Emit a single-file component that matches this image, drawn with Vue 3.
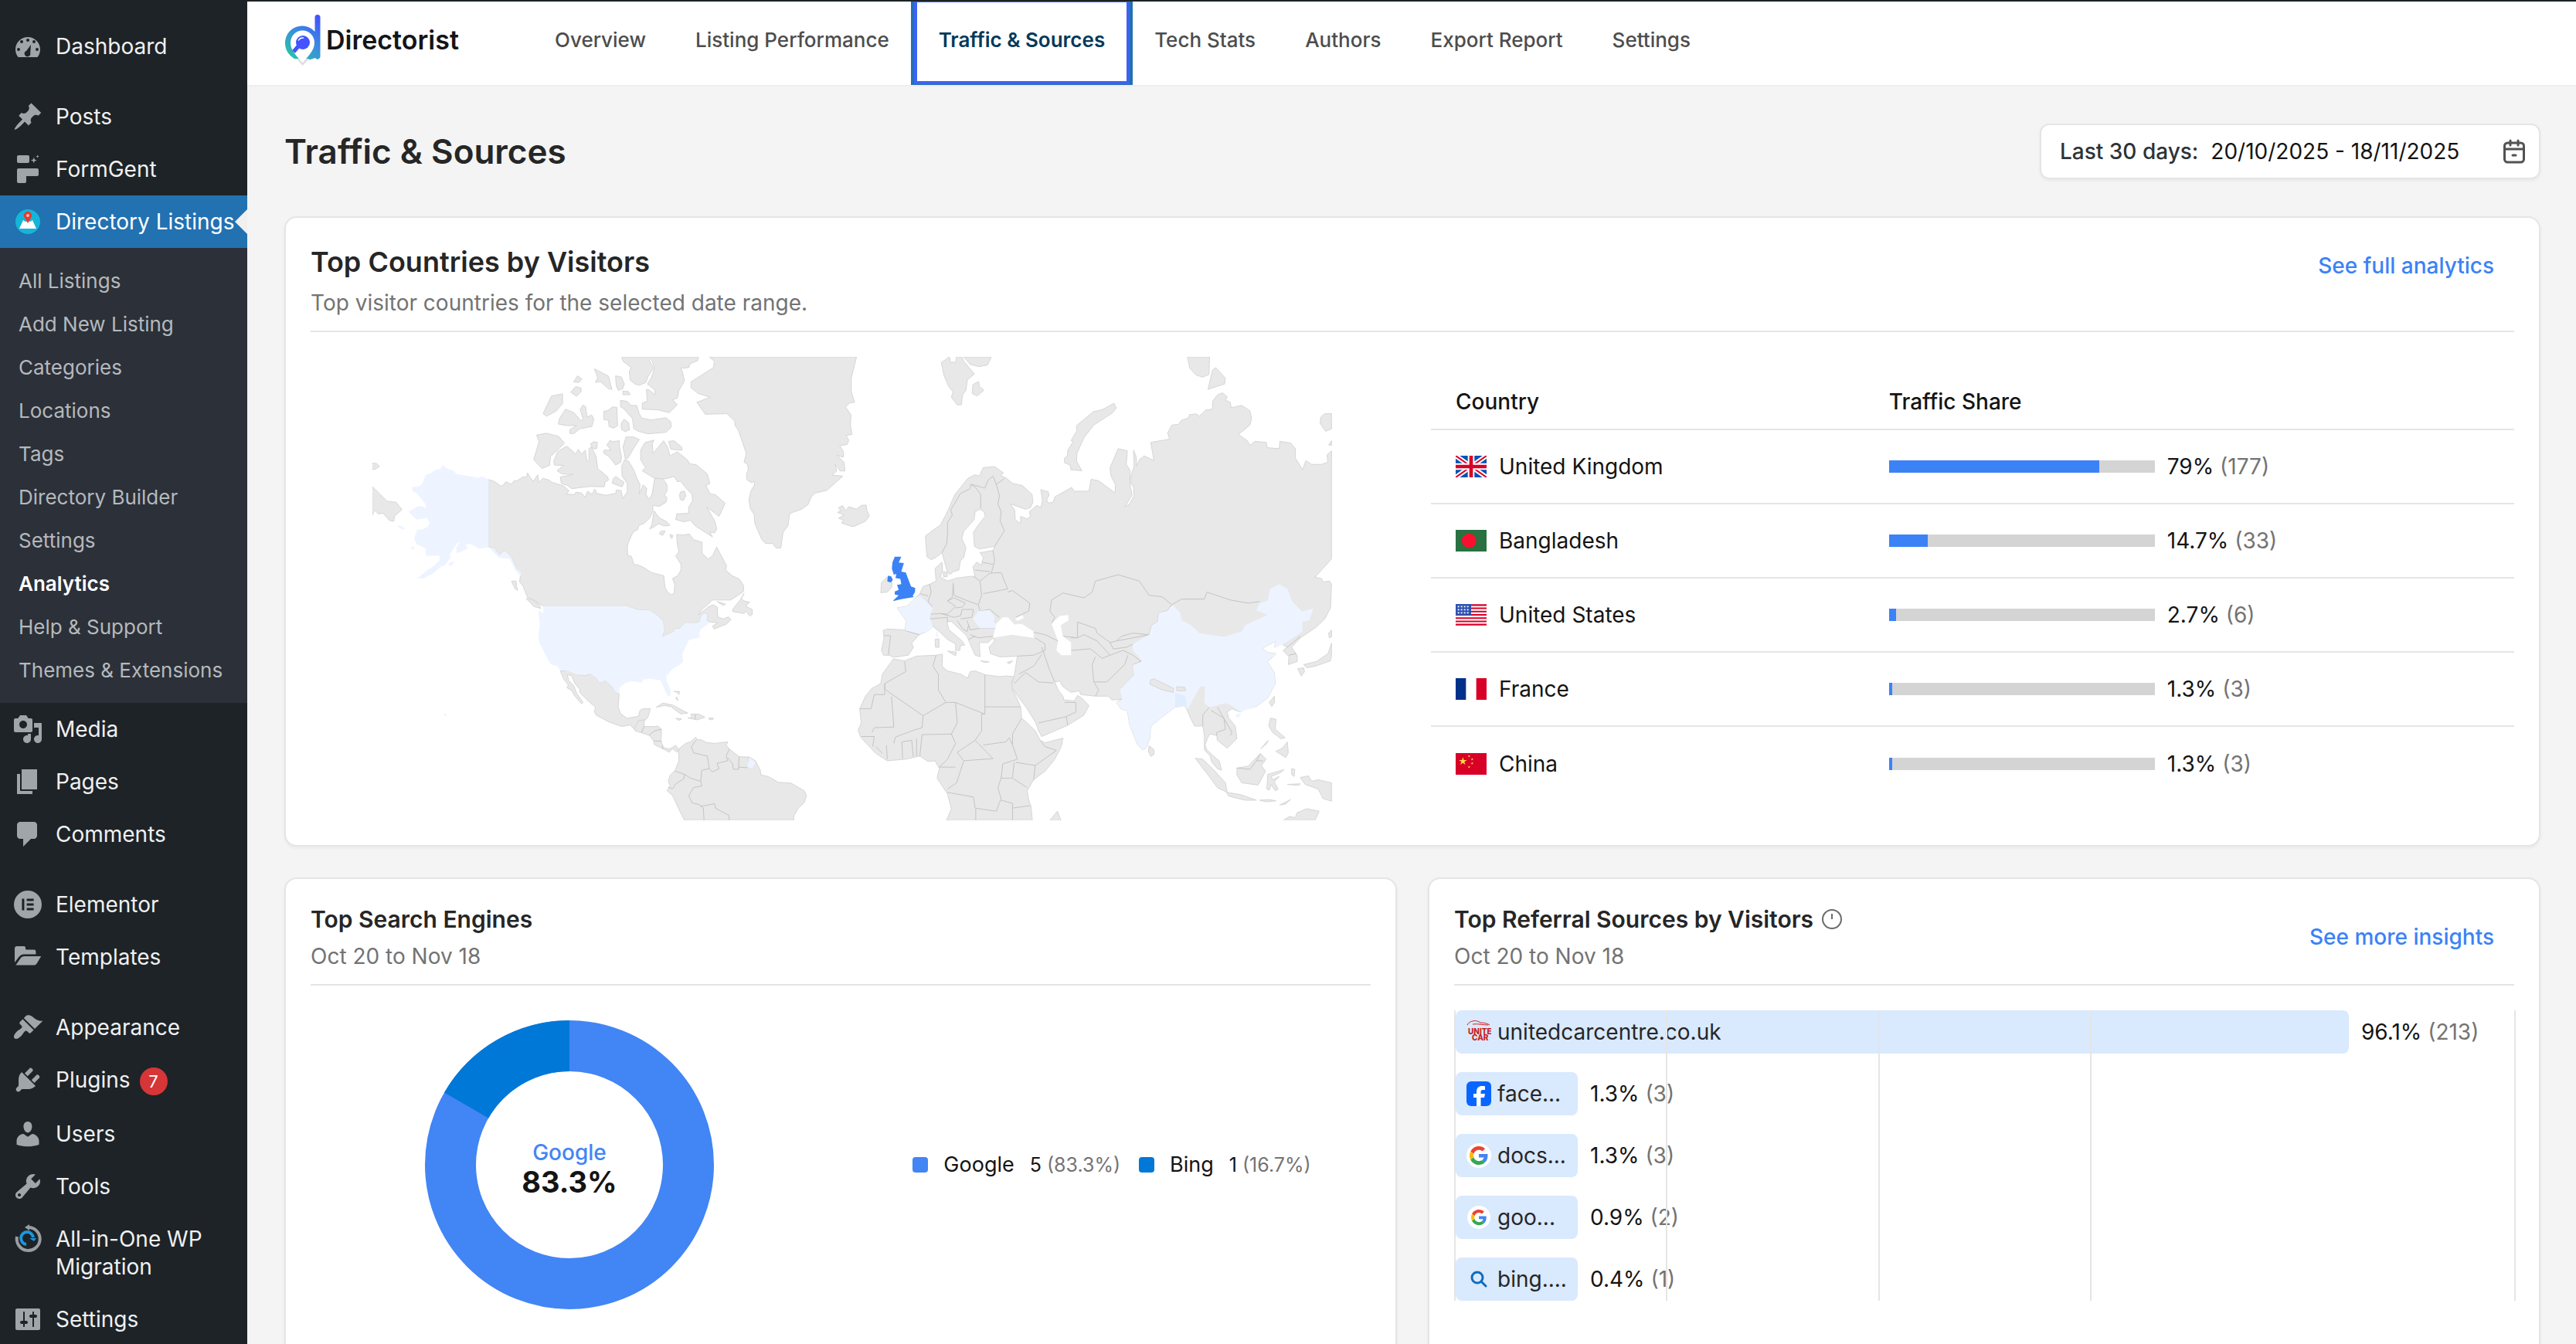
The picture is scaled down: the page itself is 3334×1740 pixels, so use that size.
<script setup>
const menu = [
  [
    { label: 'Dashboard', icon: 'M3.76 17h12.48c1.34-1.63 1.76-3.5 1.76-5 0-4.42-3.58-8-8-8s-8 3.58-8 8c0 1.5.42 3.37 1.76 5zM10 5a1 1 0 110 2 1 1 0 010-2zM6 6a1 1 0 110 2 1 1 0 010-2zM14 6a1 1 0 110 2 1 1 0 010-2zM4 11a1 1 0 110 2 1 1 0 010-2zM16 11a1 1 0 110 2 1 1 0 010-2zM12 9l-.4 5.3a1.9 1.9 0 11-2.6-1.3z' }
  ],
  [
    { label: 'Posts', icon: 'M10.44 3.02l1.82-1.82 6.36 6.35-1.83 1.82c-1.05-.68-2.48-.57-3.41.36l-.75.75c-.92.93-1.04 2.35-.35 3.41l-1.83 1.82-2.41-2.41-2.8 2.79c-.42.42-3.38 2.71-3.8 2.29s1.86-3.39 2.28-3.81l2.79-2.79L4.1 9.36l1.83-1.82c1.05.69 2.48.57 3.4-.36l.75-.75c.93-.92 1.05-2.35.36-3.41z' },
    { label: 'FormGent', icon: 'M4 1h6a1 1 0 011 1v3a1 1 0 01-1 1H4a1 1 0 01-1-1V2a1 1 0 011-1zM4 9.500h12a1 1 0 011 1v3a1 1 0 01-1 1H9V18a1 1 0 01-1 1H4a1 1 0 01-1-1v-7.500a1 1 0 011-1zM13.900 2.200l.5 1.500 1.500.5-1.500.5-.5 1.500-.5-1.500-1.500-.5 1.500-.5zM16.300.800l.3.700.7.300-.7.300-.3.700-.3-.700-.7-.300.7-.300z' },
    { label: 'Directory Listings', kind: 'directory', current: true }
  ],
  [
    { label: 'Media', icon: 'M13 11V4c0-.55-.45-1-1-1h-1.67L9 1H5L3.67 3H2c-.55 0-1 .45-1 1v7c0 .55.45 1 1 1h10c.55 0 1-.45 1-1zM7 4.500c1.380 0 2.500 1.120 2.500 2.500S8.380 9.500 7 9.500 4.500 8.380 4.500 7 5.620 4.500 7 4.500zM14 6h5v10.500c0 1.380-1.120 2.500-2.500 2.500S14 17.880 14 16.500s1.120-2.500 2.500-2.500c.17 0 .34.02.5.05V9h-3V6zm-4 8.050V13h2v3.500c0 1.380-1.120 2.500-2.500 2.500S7 17.880 7 16.500 8.120 14 9.500 14c.17 0 .34.02.5.05z' },
    { label: 'Pages', icon: 'M6 15V2h10v13H6zm-1 1h8v2H3V5h2v11z' },
    { label: 'Comments', icon: 'M5 2h9c1.100 0 2 .9 2 2v7c0 1.100-.9 2-2 2h-2l-5 5v-5H5c-1.100 0-2-.9-2-2V4c0-1.100.9-2 2-2z' }
  ],
  [
    { label: 'Elementor', icon: 'M10 1a9 9 0 110 18 9 9 0 010-18zM6.200 6.200V13.800H7.700V6.200zM9.300 6.200V7.700H13.800V6.200zM9.300 9.250V10.750H13.800V9.250zM9.300 12.300V13.800H13.800V12.300z' },
    { label: 'Templates', icon: 'M1.500 13.500V4.500A1.500 1.500 0 013 3h4.500A1 1 0 018.500 4v.5A.8.8 0 009.300 5.300H14A1.200 1.200 0 0115.200 6.500V8.300H7.500C6 8.300 5 9 4 10.200zM2.200 15.300L5 11.200C5.800 10 6.600 9.500 8 9.500h10.600l-2.600 4.400c-.6 1-1.200 1.400-2.400 1.400z' }
  ],
  [
    { label: 'Appearance', icon: 'M14.480 11.060L7.410 3.990l1.500-1.500c.5-.56 2.300-.47 3.510.32 1.210.8 1.430 1.280 2.910 2.100 1.180.64 2.450 1.260 4.450.85zm-.71.71L6.700 4.700 4.930 6.470c-.39.39-.39 1.020 0 1.410l1.060 1.060c.39.39.39 1.030 0 1.420-.6.6-1.430 1.110-2.210 1.690-.35.26-.7.53-1.010.84C1.430 14.230.4 16.080 1.400 17.070c.99 1 2.840-.03 4.180-1.360.31-.31.58-.66.85-1.020.57-.78 1.080-1.610 1.690-2.210.39-.39 1.020-.39 1.410 0l1.060 1.060c.39.39 1.020.39 1.410 0z' },
    { label: 'Plugins', badge: '7', icon: 'M13.110 4.360L9.870 7.600 8 5.730l3.240-3.240c.35-.34 1.050-.2 1.560.32.52.51.66 1.210.31 1.550zm-8 1.770l.91-1.120 9.010 9.010-1.190.84c-.71.71-2.630 1.160-3.820 1.160H6.140L4.900 17.260c-.59.59-1.540.59-2.120 0-.59-.58-.59-1.530 0-2.120l1.240-1.240v-3.880c0-1.130.4-3.190 1.090-3.890zm7.260 3.970l3.240-3.240c.34-.35 1.040-.21 1.550.31.52.51.66 1.210.31 1.550l-3.240 3.250z' },
    { label: 'Users', icon: 'M10 9.250c-2.270 0-2.730-3.440-2.730-3.440C7 4.020 7.820 2 9.970 2c2.160 0 2.980 2.020 2.710 3.810 0 0-.41 3.440-2.680 3.440zm0 2.570L12.720 10c2.390 0 4.520 2.330 4.520 4.530v2.490s-3.650 1.130-7.240 1.130c-3.650 0-7.240-1.130-7.240-1.130v-2.490c0-2.250 1.940-4.480 4.470-4.480z' },
    { label: 'Tools', icon: 'M16.680 9.770c-1.340 1.340-3.300 1.670-4.950.99l-5.410 6.520c-.99.99-2.590.99-3.580 0s-.99-2.590 0-3.570l6.520-5.420c-.68-1.650-.35-3.610.99-4.950 1.280-1.280 3.120-1.620 4.720-1.060l-2.890 2.890 2.820 2.820 2.860-2.870c.53 1.580.18 3.390-1.080 4.650zM3.810 16.210c.4.39 1.040.39 1.430 0 .4-.4.4-1.040 0-1.430-.39-.4-1.030-.4-1.430 0-.39.39-.39 1.030 0 1.430z' },
    { label: 'All-in-One WP Migration', kind: 'migration' },
    { label: 'Settings', icon: 'M18 16V4c0-.55-.45-1-1-1H3c-.55 0-1 .45-1 1v12c0 .55.45 1 1 1h14c.55 0 1-.45 1-1zM8 11h1c.55 0 1 .45 1 1s-.45 1-1 1H8v1.500c0 .28-.22.5-.5.5s-.5-.22-.5-.5V13H6c-.55 0-1-.45-1-1s.45-1 1-1h1V5.500c0-.28.22-.5.5-.5s.5.22.5.5V11zm5-2h-1c-.55 0-1-.45-1-1s.45-1 1-1h1V5.500c0-.28.22-.5.5-.5s.5.22.5.5V7h1c.55 0 1 .45 1 1s-.45 1-1 1h-1v5.500c0 .28-.22.5-.5.5s-.5-.22-.5-.5V9z' }
  ]
]

const submenu = ['All Listings', 'Add New Listing', 'Categories', 'Locations', 'Tags', 'Directory Builder', 'Settings', 'Analytics', 'Help & Support', 'Themes & Extensions']

const tabs = ['Overview', 'Listing Performance', 'Traffic & Sources', 'Tech Stats', 'Authors', 'Export Report', 'Settings']

const countries = [
  { code: 'gb', name: 'United Kingdom', share: 79, visits: 177 },
  { code: 'bd', name: 'Bangladesh', share: 14.7, visits: 33 },
  { code: 'us', name: 'United States', share: 2.7, visits: 6 },
  { code: 'fr', name: 'France', share: 1.3, visits: 3 },
  { code: 'cn', name: 'China', share: 1.3, visits: 3 }
]

const engines = [
  { name: 'Google', visits: 5, share: '83.3%', color: '#4285f4' },
  { name: 'Bing', visits: 1, share: '16.7%', color: '#0078d7' }
]

const referrals = [
  { icon: 'ucc', name: 'unitedcarcentre.co.uk', share: '96.1%', visits: 213, wide: true },
  { icon: 'facebook', name: 'face...', share: '1.3%', visits: 3 },
  { icon: 'google', name: 'docs...', share: '1.3%', visits: 3 },
  { icon: 'google-small', name: 'goo...', share: '0.9%', visits: 2 },
  { icon: 'bing', name: 'bing....', share: '0.4%', visits: 1 }
]

const star = 'M0-10L2.250-3.100H9.500L3.640 1.180 5.880 8.100 0 3.800-5.880 8.100-3.640 1.180-9.500-3.100H-2.250z'

/* Land outlines, one list of paths per half of the map */
const westLand = [
  'M1088 54L1104 68 1101 88 1032 133 1032 152 1054 170 1091 182 1050 198 1076 236 1142 234 1166 257 1168 272 1178 288 1202 360 1195 388 1206 394 1208 412 1203 425 1203 443 1218 453 1228 448 1226 462 1216 480 1210 508 1215 537 1226 553 1228 582 1250 634 1262 646 1283 646 1294 660 1308 660 1315 610 1330 590 1335 552 1345 547 1374 536 1392 522 1402 498 1413 486 1450 477 1499 432 1465 429 1480 416 1475 395 1491 416 1505 416 1503 388 1480 366 1500 372 1501 355 1489 335 1512 332 1517 318 1509 303 1527 300 1522 270 1524 238 1507 213 1520 200 1535 198 1525 165 1525 120 1541 54z',
  'M410 443L427 449 447 464 455 460 462 450 480 458 487 448 499 446 516 434 526 436 529 422 538 437 547 449 561 428 563 452 577 439 594 444 605 452 640 463 657 479 648 489 672 491 678 483 696 486 706 500 714 480 728 490 736 473 742 487 770 493 800 487 803 476 817 478 822 503 836 482 836 455 820 432 819 400 828 380 840 385 856 412 866 440 875 458 873 488 885 460 896 471 893 490 904 506 912 490 918 455 920 440 945 440 958 460 958 480 950 492 958 500 955 515 935 528 915 525 914 545 905 565 888 582 872 588 868 602 855 608 840 640 836 655 837 683 849 687 856 712 870 714 890 724 910 738 948 748 952 785 960 800 971 809 980 803 982 775 975 757 992 747 1001 730 1001 712 985 686 995 672 990 650 988 617 1006 619 1027 616 1040 634 1066 642 1066 677 1085 695 1098 685 1111 657 1141 716 1139 730 1158 748 1180 758 1194 780 1193 798 1155 825 1097 825 1085 838 1065 855 1055 872 1085 847 1100 840 1113 848 1113 865 1115 880 1133 885 1147 878 1155 887 1140 902 1103 917 1098 908 1115 897 1090 895 1080 890 1082 870 1072 868 1062 878 1058 894 1050 898 1015 898 997 916 982 916 978 926 943 942 950 920 946 893 930 875 905 858 870 856 836 845 832 838 832 844 577 844 540 820 530 818 515 780 505 768 508 740 495 725 480 690 460 668 442 683 428 662 410 657z',
  'M918 318L890 326 877 350 877 380 892 405 882 415 918 438 950 441 968 437 980 433 990 450 1000 448 1018 472 1035 490 1037 510 1025 530 1024 550 988 552 985 570 1010 577 1030 572 1045 590 1098 625 1090 610 1105 612 1111 600 1105 575 1080 530 1118 560 1137 518 1130 512 1108 492 1090 488 1078 462 1090 456 1082 425 1048 396 1028 393 1020 380 990 355 967 368 960 340 948 320 915 360 913 330z',
  'M650 337L622 354 610 385 612 397 640 398 620 415 635 425 670 427 630 435 633 455 652 462 665 472 720 465 765 466 768 450 778 445 776 435 745 408 740 370 735 358 725 340 718 345 718 385 712 385 707 350 695 362 685 347 678 362z',
  'M557 302L587 296 625 306 643 328 600 370 597 398 574 408 548 380 565 322z',
  'M603 178L637 171 637 202 617 226 588 242 577 234z',
  'M646 220L672 231 694 257 700 250 691 220 700 207 708 212 712 245 726 238 733 250 727 275 690 282 672 297 659 297 660 284 680 272 650 272 624 267 628 248z',
  'M678 148L694 153 694 165 680 179 662 166zM683 114L696 124 688 135 671 134zM735 92L778 115 789 157 778 155 753 132 738 135 745 120zM800 114L818 118 827 140 822 155 808 160 802 145zM822 162L840 164 845 174 823 174z',
  'M764 226L775 225 790 213 804 214 806 272 795 280 780 275 778 255 764 253zM826 252L840 262 843 285 830 291 818 284 817 265z',
  'M815 192L835 195 848 208 865 208 872 232 880 248 910 254 955 247 970 260 971 277 955 293 900 298 870 290 856 282 852 250 825 218 815 212z',
  'M819 54L823 68 848 88 842 100 845 128 860 140 873 144 893 135 900 115 917 90 905 68 905 54z',
  'M908 54L920 90 910 120 898 140 920 158 922 175 905 160 895 157 897 195 882 200 882 220 930 222 965 231 990 206 975 190 990 185 995 160 1012 130 1005 100 1000 90 1025 88 1030 75 1052 66 1055 54z',
  'M784 318L790 323 812 320 812 340 818 370 816 388 800 397 780 370 764 360 764 350 786 350 773 333zM832 308L855 308 873 316 855 345 838 375 830 378 823 340zM733 323L744 325 742 345 730 345 723 330z',
  'M800 433L826 452 820 466 790 455 792 442zM963 322L980 320 1003 340 1004 350 970 347zM918 542L935 565 955 575 967 588 950 590 932 583 920 592 905 600 912 585zM940 607L953 606 945 620 934 615zM968 617L976 620 973 630 968 625z',
  'M480 765L494 765 495 780 499 795 490 788zM525 820L545 825 565 840 570 852 548 845zM1195 804L1183 825 1160 855 1160 862 1185 866 1195 868 1200 860 1213 876 1221 870 1220 855 1200 845 1212 832 1195 828 1187 820zM1113 830L1138 838 1130 842zM1000 482L1012 480 1016 495 1008 510 998 505 997 490z',
  'M630 1050L652 1049 680 1062 710 1064 722 1058 740 1072 752 1088 768 1080 790 1100 800 1118 811 1122 808 1165 815 1185 835 1200 870 1194 875 1175 885 1170 907 1170 900 1195 893 1205 885 1206 870 1208 867 1220 858 1235 845 1222 818 1226 780 1212 740 1190 735 1180 738 1165 710 1140 690 1118 690 1108 675 1090 665 1065 652 1062 655 1080 672 1098 680 1120 700 1150 696 1155 675 1130 665 1112 650 1103 655 1095 640 1075z',
  'M870 1208L889 1205 887 1226 918 1227 930 1225 941 1235 940 1270 942 1280 945 1292 965 1298 985 1286 994 1298 990 1308 975 1297 965 1308 948 1298 920 1284 916 1270 903 1254 880 1246 860 1240 858 1232z',
  'M925 1165L945 1152 975 1158 1022 1184 1000 1186 985 1175 970 1163 950 1160zM1022 1199L1035 1198 1032 1187 1055 1187 1075 1197 1050 1205zM1087 1199L1101 1200 1098 1205 1088 1204zM985 1200L1003 1202 995 1207zM980 1115L996 1115 995 1125 990 1118zM988 1132L992 1144 985 1138z',
  'M994 1298L1015 1280 1030 1275 1047 1260 1050 1268 1062 1268 1080 1277 1105 1280 1145 1275 1140 1285 1150 1298 1165 1310 1180 1322 1210 1323 1230 1335 1245 1365 1247 1380 1270 1385 1300 1403 1340 1406 1380 1430 1387 1445 1380 1468 1362 1485 1348 1510 1348 1524 1012 1524 1000 1500 975 1445 958 1430 968 1415 962 1400 968 1380 983 1365 995 1335z',
  'M52 465L98 512 125 515 143 538 120 560 118 575 105 573 85 550 70 552 60 540 52 556zM52 391L65 392 74 401 62 410 52 411z'
]
const westBorders = 'M887 1226L880 1246M903 1254L920 1240 941 1235M918 1272L940 1273M945 1285V1298M1045 1187V1204M1047 1270L1033 1290 1040 1310 1082 1320 1088 1360 1065 1365 1062 1400 1030 1390 1012 1378 983 1368M1088 1360L1098 1370 1118 1360 1112 1343 1145 1335 1140 1320 1150 1298M1145 1325L1160 1345 1162 1362 1178 1362 1180 1322M1178 1355L1207 1357 1210 1323M1062 1400L1065 1415 1040 1420 1025 1445 1035 1468 1060 1475 1070 1485 1072 1524M1060 1480L1105 1471 1107 1485 1148 1508 1150 1524M1012 1378L1010 1392 985 1408 975 1424 962 1418'
const westVisited = [
  'M410 443L388 433 378 437 355 433 310 425 302 415 285 410 267 398 262 410 245 412 233 422 217 427 206 455 195 465 175 466 175 479 190 488 215 520 218 533 200 527 188 530 163 545 188 570 220 565 228 580 225 590 210 600 190 602 180 630 188 648 215 660 217 685 260 685 258 700 240 718 225 727 190 757 210 757 240 740 262 720 275 715 293 690 290 680 313 645 322 640 310 660 312 678 345 662 340 648 355 648 380 662 410 658 440 690 475 695 490 728 508 750 510 738 495 725 480 690 460 668 442 683 428 662 410 657zM285 712L297 702 305 706 292 718zM126 590L140 590 153 598 146 602zM168 657L182 658 178 666zM272 1184L282 1188 275 1194z',
  'M577 844L832 844 832 838 836 845 870 856 905 858 930 875 946 893 950 920 943 942 978 926 982 916 997 916 1015 898 1050 898 1058 894 1062 878 1072 868 1082 870 1080 890 1090 897 1060 920 1057 935 1062 943 1025 952 1020 965 1010 985 1005 1000 1008 1020 1000 1028 975 1045 957 1065 957 1080 970 1115 968 1130 960 1130 945 1095 938 1080 920 1077 905 1075 885 1078 880 1088 850 1082 830 1088 812 1104 811 1122 800 1118 790 1100 768 1080 752 1088 740 1072 722 1058 710 1062 680 1062 652 1050 630 1048 620 1035 600 1028 580 990 565 960 563 930 567 905 562 855 578 868z',
  'M1210 1325L1230 1340 1220 1358 1205 1356z'
]

const eastLand = [
  'M-38 547L-28 543 -35 532 -22 526 -13 543 -5 531 0 530 20 537 36 525 50 524 52 540 60 558 48 575 12 592 0 590 -25 581 -20 571 -35 566 -18 555z',
  'M306 54L281 72 290 115 305 150 317 165 312 182 330 206 343 206 346 175 357 160 361 127 383 108 350 68 345 54 328 54 325 71 309 71zM350 54L370 78 397 85 423 80 435 54zM396 132L398 148 412 160 391 178 376 170 378 142z',
  'M812 201L819 216 808 231 750 270 720 310 698 360 697 385 713 415 680 412 677 397 660 390 660 375 669 368 670 350 687 322 680 320 697 290 697 272 748 228 775 222z',
  'M1038 54L1045 90 1065 112 1085 118 1104 110 1106 54zM1125 88L1155 122 1152 140 1101 157 1115 96zM1481 234L1460 234 1448 245 1446 265 1463 290 1481 282zM1481 320L1472 333 1481 335z',
  'M232 622L260 600 278 588 300 545 322 492 362 440 384 428 398 432 410 405 445 402 472 422 463 430 480 438 500 455 530 462 560 490 563 515 555 532 540 537 520 530 493 520 507 540 508 570 525 583 525 560 545 568 555 560 552 545 575 525 587 532 592 510 587 475 610 482 612 495 605 505 610 518 625 515 630 498 682 468 690 480 735 480 742 442 765 447 815 485 817 460 802 430 800 405 825 345 853 352 850 395 862 415 860 455 868 492 845 530 860 520 874 494 872 466 863 456 865 430 874 400 872 350 880 370 882 400 890 380 905 368 935 383 925 325 983 315 977 295 990 270 1010 268 1020 255 1040 248 1045 237 1065 235 1075 242 1095 222 1115 220 1115 195 1130 175 1145 168 1160 180 1155 192 1170 198 1172 215 1205 208 1230 225 1235 250 1230 270 1195 300 1222 320 1230 335 1245 322 1280 325 1283 342 1320 345 1322 322 1355 327 1370 345 1370 375 1392 412 1402 383 1420 395 1450 395 1470 388 1467 365 1481 352 1481 695 1430 753 1450 757 1455 768 1475 765 1481 775 1478 850 1460 885 1435 910 1410 928 1385 945 1358 975 1375 1000 1376 1020 1348 1030 1350 1005 1332 985 1345 975 1328 965 1305 975 1310 955 1268 978 1285 992 1310 995 1295 1010 1283 1020 1305 1055 1308 1090 1285 1135 1250 1162 1215 1172 1200 1180 1175 1170 1160 1180 1165 1200 1185 1225 1190 1265 1160 1295 1148 1285 1130 1270 1128 1255 1108 1250 1100 1262 1092 1285 1098 1300 1118 1320 1135 1335 1143 1365 1130 1360 1112 1338 1108 1320 1090 1300 1090 1255 1085 1225 1060 1225 1050 1205 1035 1170 1028 1160 1000 1165 980 1180 925 1225 922 1265 910 1295 900 1300 885 1285 860 1220 853 1175 835 1172 820 1150 835 1140 805 1142 795 1130 755 1130 710 1125 705 1113 680 1118 655 1100 645 1082 630 1085 640 1110 655 1130 658 1142 690 1145 700 1128 712 1135 735 1160 720 1190 670 1222 590 1258 580 1240 572 1215 545 1170 520 1135 495 1100 505 1068 515 1003 480 1005 460 1005 432 995 428 975 445 955 440 945 425 960 398 960 400 1005 385 1000 370 965 360 940 340 920 312 893 298 895 305 920 345 955 353 968 340 970 338 985 325 985 325 965 300 950 275 925 250 905 245 920 213 935 190 962 195 975 180 1000 135 1007 120 1000 103 1000 97 985 105 945 102 922 115 917 170 920 173 890 145 850 175 845 200 820 215 805 225 782 245 775 265 765 262 725 283 705 285 730 278 752 300 765 330 755 372 750 385 750 378 720 390 705 405 715 410 690 400 675 440 668 445 655 398 663 383 655 380 610 400 580 416 560 413 545 400 537 385 545 382 570 350 607 344 630 357 660 350 690 340 700 335 730 318 735 308 744 300 738 290 700 283 675 262 692 250 697 237 688z',
  'M133 1012L168 1018 205 1003 265 1000 285 997 283 1035 300 1050 340 1060 362 1073 370 1052 385 1050 415 1062 460 1068 483 1066 505 1068 497 1085 500 1110 515 1140 525 1165 528 1200 545 1215 570 1240 585 1270 600 1278 655 1263 650 1290 630 1330 600 1368 565 1395 545 1430 550 1460 557 1480 561 1524 297 1524 312 1487 300 1440 268 1390 275 1360 262 1335 240 1337 215 1320 170 1330 115 1335 80 1312 55 1285 33 1260 25 1238 35 1215 30 1170 48 1130 68 1105 95 1090 100 1060 128 1020z',
  'M262 950L274 948 274 975 263 975zM300 987L327 990 325 1002zM402 1018L428 1021 415 1023zM483 1023L500 1018 492 1027zM287 735L298 738 300 750 288 752zM115 752L118 768 130 770 128 785 115 800 95 802 97 770z',
  'M618 1520L638 1495 649 1524 615 1524zM920 1287L935 1300 935 1315 925 1321 918 1305z',
  'M1062 1327L1085 1330 1120 1365 1155 1405 1160 1435 1130 1420 1105 1385zM1158 1435L1200 1442 1250 1460 1215 1460 1165 1447zM1190 1358L1225 1352 1262 1312 1280 1330 1265 1350 1278 1368 1255 1412 1205 1405 1190 1380z',
  'M1285 1378L1335 1363 1325 1372 1295 1385 1300 1395 1320 1385 1305 1402 1317 1425 1308 1430 1295 1410 1290 1428 1282 1425zM1293 1200L1310 1203 1308 1235 1325 1250 1338 1262 1325 1265 1300 1245 1288 1225zM1345 1275L1348 1310 1340 1325 1310 1305 1330 1295zM1263 1297L1286 1270 1282 1280zM1305 1130L1306 1150 1297 1163 1290 1150z',
  'M1481 962L1470 995 1435 1020 1395 1030 1405 1040 1430 1035 1450 1028 1478 1018 1481 1000zM1377 1043L1395 1040 1398 1052 1388 1066zM1481 920L1472 930 1474 945 1481 942z',
  'M1385 1388L1410 1383 1420 1400 1440 1395 1481 1405 1481 1463 1455 1455 1440 1425 1400 1410zM1260 1460L1290 1458 1310 1462 1280 1465zM1322 1475L1355 1458 1340 1472zM1358 1360L1368 1362 1366 1385 1358 1378zM1345 1410L1385 1408 1380 1413zM1333 1524L1350 1512 1370 1515 1375 1500 1405 1487 1443 1495 1430 1524z'
]
const seas = 'M450 900L440 945 500 935 530 940 565 945 565 925 528 900 505 903 495 890 485 880 470 880 455 895zM508 884L530 873 535 882 515 892zM620 900L645 875 672 873 672 890 648 905 655 940 680 960 680 1000 650 1000 635 985 640 955z'
const eastBorders = [
  'M283 675L297 648 300 620 300 580 315 555 310 540 340 487 370 472 372 458 385 467 402 490 402 535M372 458L415 470 425 445 440 432 450 458 475 440M450 458L460 495 455 520 465 545 462 575 475 605 445 655',
  'M105 938L125 938 118 1000M170 922L213 935M245 775L250 800 240 830 252 845 245 870 280 868 300 870 325 845 300 828 315 815 318 770M318 775L320 810 355 825 395 840 405 810 400 765M300 828L320 818 355 835 345 848 325 850M215 805L240 812M280 868L320 880 340 875 345 855 380 855 375 880 340 885M400 765L430 740 465 738 485 790 410 805M440 668L445 700 435 740M385 730L430 735M380 750L400 765M405 705L440 712M395 840L400 860 430 855 460 880M485 800L500 795 553 835 550 860 510 880M245 885L300 880 300 895M330 890L345 915 360 925 365 905M360 890L370 920 400 915 445 915M370 935L395 945 440 940M365 950L385 940',
  'M525 900L555 925 600 935 640 955M570 945L600 965 600 985 565 1000 515 1003M615 860L620 825 655 803 720 818 745 800 755 765 825 745 890 765 920 810 960 815 990 840 975 860 950 865 945 895 928 905 920 935 870 930 835 940 820 955 800 960 760 930 755 915 700 895 700 945 655 940M615 860L630 880 620 900M680 945L700 945 720 935 760 955 800 1000 775 1010 740 980 680 985M800 960L810 980 850 975 870 965M820 955L920 935M800 1000L840 985 870 1000 895 1020 870 1030 880 1055 835 1105M755 1005L745 1030 750 1085 765 1110 755 1130M750 1085L790 1085 845 1030 855 1000M590 975L615 1050 630 1085M590 997L565 1035 520 1060M505 1090L540 1055 580 1085 625 1088M580 1215L665 1195 670 1222M665 1195L695 1180 695 1150 660 1150',
  'M990 840L1020 822 1090 822 1098 800 1170 825 1225 835 1260 830M1345 975L1385 940M1350 1000L1372 995M1105 1165L1085 1190 1085 1225M1110 1175L1150 1200 1155 1235 1128 1245 1128 1255M1130 1165L1175 1245 1170 1255M1190 1358L1230 1362 1250 1335 1270 1335M1250 1335L1262 1312',
  'M168 1020L172 1052 107 1090 107 1108 225 1192 295 1150 272 1110 272 1060 255 1035 265 1000M415 1062V1187L325 1150 295 1150M415 1164H525M107 1125H75L65 1170H30M107 1090V1125M128 1132L135 1228 75 1230 68 1245M225 1192L222 1230 190 1240 140 1260 135 1280M325 1150L330 1215 312 1250 222 1252M405 1187V1240L385 1270 330 1308M405 1187H415M312 1250L325 1280 300 1330 275 1355 325 1355M330 1308L350 1335M385 1270L440 1328 350 1335 328 1405 300 1425M410 1285L480 1275 490 1262 500 1285 515 1330 470 1345 465 1390M528 1200L500 1250 500 1285M585 1270L600 1290 635 1302 570 1350 565 1395M510 1340L570 1350M465 1390H500L545 1420M500 1388L505 1340M465 1390L455 1420 465 1455 450 1495 385 1485 380 1450 300 1435M387 1524V1485M465 1460L500 1470 500 1524M500 1485L555 1477M160 1275L162 1328M190 1270L195 1322M160 1275L190 1270M205 1265V1320M215 1320L222 1252M112 1285L115 1330M35 1258H75L70 1290M80 1290L100 1312'
]
const eastVisited = [
  'M992 840L1015 865 1020 890 1050 905 1075 930 1150 942 1205 925 1215 905 1285 872 1250 858 1260 835 1285 828 1292 790 1320 775 1345 790 1360 830 1390 862 1425 852 1412 890 1390 895 1392 925 1355 950 1328 968 1305 975 1310 955 1268 978 1285 992 1310 995 1283 1020 1305 1055 1308 1090 1285 1135 1250 1162 1200 1180 1175 1160 1155 1152 1125 1160 1105 1165 1090 1150 1092 1100 1078 1098 1058 1135 1038 1172 1028 1160 1000 1165 980 1180 925 1225 922 1265 910 1295 900 1300 885 1285 860 1220 853 1175 835 1172 820 1150 838 1140 830 1110 875 1060 870 1030 900 1020 870 985 870 965 920 935 928 905 945 895 950 865 975 860z',
  'M1187 1188L1204 1184 1195 1200 1186 1195z',
  'M145 850L175 845 200 820 215 812 240 835 255 850 245 880 255 910 250 920 215 932 170 922 173 890z',
  'M395 860L430 857 445 880 442 895 450 900 445 915 400 915 378 885z',
  'M265 928L271 926 270 945 265 940z'
]
const nepal = 'M925 1078L935 1075 995 1105 995 1118 960 1110 922 1092zM1005 1100L1030 1102 1032 1113 1005 1113z'
const bangladesh = 'M1000 1120L1030 1128 1035 1150 1038 1172 1028 1158 1000 1165z'
const britain = 'M138 688L158 688 150 706 166 708 158 735 172 738 178 755 188 782 201 787 200 800 193 812 197 816 160 822 135 828 133 827 150 810 138 808 138 798 150 793 145 777 158 775 155 758 140 755 143 742 135 745 129 725 131 705zM117 748L127 750 132 762 126 769 115 766z'
</script>

<template>
  <div class="admin">
    <nav class="sidebar" aria-label="Admin menu">
      <ul v-for="(group, g) in menu" :key="g" :class="['group', { flush: g === 2 }]">
        <li v-for="item in group" :key="item.label">
          <a href="#" :class="['item', { current: item.current }]">
            <svg v-if="item.icon" class="glyph" viewBox="0 0 20 20" aria-hidden="true">
              <path :d="item.icon" fill="#a0a5aa" fill-rule="evenodd" />
            </svg>
            <svg v-else-if="item.kind === 'directory'" class="glyph" viewBox="0 0 40 40" aria-hidden="true">
              <circle cx="20" cy="20" r="16" fill="#14b5d8" />
              <path d="M14 18l-5 11h22l-5-11-3 2-3-1-3 1z" fill="#fff" />
              <path d="M20 22l-4-7a5 5 0 118 0z" fill="#e8382e" />
              <circle cx="20" cy="12" r="2" fill="#fbb" />
            </svg>
            <svg v-else class="glyph" viewBox="0 0 40 40" aria-hidden="true">
              <path d="M20 5a15 15 0 11-14 12" fill="none" stroke="#9a9da0" stroke-width="4" />
              <path d="M22 1v8l-6-4z" fill="#9a9da0" />
              <path d="M18 27a8 8 0 119-9" fill="none" stroke="#1c97dc" stroke-width="4" />
              <path d="M22 19h9l-3 4z" fill="#1c97dc" />
            </svg>
            <span class="name">{{ item.label }}</span>
            <span v-if="item.badge" class="badge">{{ item.badge }}</span>
          </a>
          <ul v-if="item.current" class="submenu">
            <li v-for="sub in submenu" :key="sub">
              <a href="#" :class="{ active: sub === 'Analytics' }">{{ sub }}</a>
            </li>
          </ul>
        </li>
      </ul>
    </nav>

    <div class="page">
      <header class="topbar">
        <a href="#" class="brand">
          <svg class="logo" viewBox="0 0 48 68" aria-hidden="true">
            <defs>
              <linearGradient id="brandTint" x1="2" y1="56" x2="44" y2="4" gradientUnits="userSpaceOnUse">
                <stop offset="0" stop-color="#27c7a0" />
                <stop offset=".5" stop-color="#3a8fdc" />
                <stop offset="1" stop-color="#4353ff" />
              </linearGradient>
            </defs>
            <path d="M39.500 4.500a3.500 3.500 0 017 0V55a3.500 3.500 0 01-6.500 2L34 59 13 58C5 53 1 46 1 38a22 22 0 0138.500-15z" fill="url(#brandTint)" />
            <path d="M16 58h16l-8.500 9z" fill="#ddd" />
            <path d="M23.500 21.500c9 0 15.500 7 15.500 16 0 10-9 18-15.500 26C17 55.500 8 47.500 8 37.500c0-9 6.500-16 15.500-16z" fill="#fff" />
            <path d="M18 42l-6 7" stroke="#4353ff" stroke-width="5" />
            <circle cx="24" cy="37" r="9" fill="#4353ff" />
            <path d="M18.500 34a6 6 0 016-3" fill="none" stroke="#fff" stroke-width="1.500" stroke-linecap="round" />
          </svg>
          <span>Directorist</span>
        </a>
        <nav class="tabs" aria-label="Analytics sections">
          <a v-for="tab in tabs" :key="tab" href="#" :class="{ selected: tab === 'Traffic & Sources' }">{{ tab }}</a>
        </nav>
      </header>

      <main class="content">
        <div class="heading">
          <h1>Traffic &amp; Sources</h1>
          <button type="button" class="range">
            <span class="range-label">Last 30 days:</span>
            <span>20/10/2025 - 18/11/2025</span>
            <svg viewBox="0 0 32 32" aria-hidden="true" fill="none" stroke="#525252" stroke-width="3" stroke-linecap="round">
              <rect x="3.500" y="5" width="25" height="25" rx="4" />
              <path d="M4 13h24M11 2v6M21 2v6M14 21h4" />
            </svg>
          </button>
        </div>

        <section class="card">
          <div class="card-head lead">
            <div>
              <h2>Top Countries by Visitors</h2>
              <p>Top visitor countries for the selected date range.</p>
            </div>
            <a href="#" class="more">See full analytics</a>
          </div>
          <div class="countries">
            <svg class="map" viewBox="482 462 1242 600" role="img" aria-label="World map of visitors">
              <g transform="translate(460 440) scale(.4209 .4082)">
                <path v-for="d in westLand" :key="d" :d="d" class="land" />
                <path :d="westBorders" class="border" />
                <path v-for="d in westVisited" :key="d" :d="d" class="visited" />
              </g>
              <g transform="translate(1100 440) scale(.4209 .4082)">
                <path v-for="d in eastLand" :key="d" :d="d" class="land" />
                <path v-for="d in eastBorders" :key="d" :d="d" class="border" />
                <path :d="seas" class="sea" />
                <path v-for="d in eastVisited" :key="d" :d="d" class="visited" />
                <path :d="nepal" class="land" />
                <path :d="bangladesh" fill="#e0edff" />
                <path :d="britain" fill="#3b82f6" />
              </g>
            </svg>
            <table>
              <thead>
                <tr>
                  <th scope="col">Country</th>
                  <th scope="col">Traffic Share</th>
                </tr>
              </thead>
              <tbody>
                <tr v-for="c in countries" :key="c.code">
                  <td>
                    <div class="cell">
                      <svg class="flag" viewBox="0 0 60 42" aria-hidden="true">
                        <g v-if="c.code === 'gb'">
                          <path d="M0 0h60v42H0z" fill="#0052b4" />
                          <path d="M0 0L60 42M60 0L0 42" stroke="#fff" stroke-width="9" />
                          <path d="M0 0L60 42M60 0L0 42" stroke="#d80027" stroke-width="3" />
                          <path d="M30 0V42M0 21H60" stroke="#fff" stroke-width="13" />
                          <path d="M30 0V42M0 21H60" stroke="#d80027" stroke-width="7" />
                        </g>
                        <g v-else-if="c.code === 'bd'">
                          <path d="M0 0h60v42H0z" fill="#2a7041" />
                          <circle cx="26" cy="21" r="14" fill="#f9102e" />
                        </g>
                        <g v-else-if="c.code === 'us'">
                          <path d="M0 0h60v42H0z" fill="#fff" />
                          <path d="M0 2H60M0 8.300H60M0 14.600H60M0 21H60M0 27.400H60M0 33.700H60M0 40H60" stroke="#d80027" stroke-width="3.200" />
                          <path d="M0 0h30v22H0z" fill="#2e52b2" />
                          <path d="M4 5H28M4 11H28M4 17H28" stroke="#fff" stroke-width="2.500" stroke-dasharray="3 3" />
                        </g>
                        <g v-else-if="c.code === 'fr'">
                          <path d="M0 0h20v42H0z" fill="#00318a" />
                          <path d="M40 0h20v42H40z" fill="#d80027" />
                        </g>
                        <g v-else>
                          <path d="M0 0h60v42H0z" fill="#d80027" />
                          <g fill="#ffda44">
                            <path :d="star" transform="translate(14 16) scale(.8)" />
                            <path :d="star" transform="translate(26 6) scale(.28)" />
                            <path :d="star" transform="translate(32 12) scale(.28)" />
                            <path :d="star" transform="translate(32 20) scale(.28)" />
                            <path :d="star" transform="translate(26 27) scale(.28)" />
                          </g>
                        </g>
                      </svg>
                      {{ c.name }}
                    </div>
                  </td>
                  <td>
                    <div class="cell">
                      <span class="track"><span class="fill" :style="{ width: c.share + '%' }"></span></span>
                      <span>{{ c.share }}% <span class="muted">({{ c.visits }})</span></span>
                    </div>
                  </td>
                </tr>
              </tbody>
            </table>
          </div>
        </section>

        <div class="columns">
          <section class="card small">
            <div class="card-head">
              <div>
                <h3>Top Search Engines</h3>
                <p>Oct 20 to Nov 18</p>
              </div>
            </div>
            <div class="engines">
              <div class="donut-box">
                <svg class="donut" viewBox="0 0 376 376" role="img" aria-label="Google 83.3%, Bing 16.7%">
                  <circle cx="188" cy="188" r="154" fill="none" stroke="#4285f4" stroke-width="66" />
                  <path d="M54.630 111A154 154 0 01188 34" fill="none" stroke="#0078d7" stroke-width="66" />
                </svg>
                <div class="donut-label">
                  <span>Google</span>
                  <strong>83.3%</strong>
                </div>
              </div>
              <ul class="legend">
                <li v-for="e in engines" :key="e.name">
                  <i :style="{ background: e.color }"></i>
                  <span class="engine">{{ e.name }}</span>
                  <span>{{ e.visits }} <span class="muted">({{ e.share }})</span></span>
                </li>
              </ul>
            </div>
          </section>

          <section class="card small">
            <div class="card-head">
              <div>
                <h3>
                  Top Referral Sources by Visitors
                  <svg class="info" viewBox="0 0 28 28" aria-hidden="true" fill="none" stroke="#6b6b6b" stroke-width="2">
                    <circle cx="14" cy="14" r="12" />
                    <path d="M14 7v7" />
                  </svg>
                </h3>
                <p>Oct 20 to Nov 18</p>
              </div>
              <a href="#" class="more">See more insights</a>
            </div>
            <div class="chart">
              <div v-for="r in referrals" :key="r.name" :class="['row', { wide: r.wide }]">
                <div class="bar">
                  <svg class="favicon" viewBox="0 0 32 32" aria-hidden="true">
                    <g v-if="r.icon === 'ucc'">
                      <path d="M1 7c3-6 12-7 17-3 5 0 9 1 12 3M8 6c7-1 13 1 20 1" fill="none" stroke="#d8201c" stroke-width="1" />
                      <text x="2" y="19" class="ucc">UNITE</text>
                      <text x="7" y="27" class="ucc">CAR</text>
                    </g>
                    <g v-else-if="r.icon === 'facebook'">
                      <rect width="32" height="32" rx="6" fill="#0866ff" />
                      <path d="M13 32V21H9v-5h4v-2c0-6 3-8 7-8 2 0 3 0 4 .3V11h-2.500c-2.500 0-3 1-3 3v2H24l-1 5h-4.500v11z" fill="#fff" />
                    </g>
                    <g v-else-if="r.icon === 'bing'" fill="none" stroke="#0f6cbd" stroke-width="3" stroke-linecap="round">
                      <circle cx="14" cy="14" r="7" />
                      <path d="M19 19l6 6" />
                    </g>
                    <g v-else>
                      <circle cx="16" cy="16" :r="r.icon === 'google' ? 16 : 15" fill="#fff" />
                      <g :transform="r.icon === 'google' ? 'translate(4 4) scale(.5)' : 'translate(6 6) scale(.42)'">
                        <path fill="#ea4335" d="M24 9.500c3.540 0 6.710 1.220 9.210 3.600l6.850-6.850C35.900 2.380 30.470 0 24 0 14.620 0 6.510 5.380 2.560 13.220l7.980 6.190C12.430 13.720 17.740 9.500 24 9.500z" />
                        <path fill="#4285f4" d="M46.980 24.550c0-1.570-.15-3.090-.38-4.550H24v9.020h12.940c-.58 2.960-2.260 5.480-4.780 7.180l7.730 6c4.510-4.180 7.090-10.360 7.090-17.650z" />
                        <path fill="#fbbc05" d="M10.530 28.590c-.48-1.450-.76-2.990-.76-4.590s.27-3.140.76-4.590l-7.980-6.190C.92 16.460 0 20.120 0 24c0 3.880.92 7.540 2.560 10.780l7.970-6.190z" />
                        <path fill="#34a853" d="M24 48c6.480 0 11.930-2.130 15.890-5.810l-7.730-6c-2.150 1.450-4.920 2.300-8.160 2.300-6.260 0-11.570-4.220-13.470-9.910l-7.980 6.190C6.510 42.620 14.620 48 24 48z" />
                      </g>
                    </g>
                  </svg>
                  {{ r.name }}
                </div>
                <span class="value">{{ r.share }} <span class="muted">({{ r.visits }})</span></span>
              </div>
              <div class="gridlines" aria-hidden="true">
                <i></i><i></i><i></i><i></i><i class="blank"></i>
              </div>
            </div>
          </section>
        </div>
      </main>
    </div>
  </div>
</template>

<style>
body {
  margin: 0;
  background: #f4f4f4;
}
</style>

<style scoped>
.admin {
  display: flex;
  height: 100vh;
  overflow: hidden;
  font-family: Inter, "Liberation Sans", sans-serif;
  font-size: 28px;
  line-height: 36px;
  color: #141414;
  background: #f4f4f4;
}
.admin * {
  box-sizing: border-box;
}
a {
  text-decoration: none;
}
ul {
  list-style: none;
  margin: 0;
  padding: 0;
}
h1, h2, h3, p {
  margin: 0;
}
.muted {
  color: #737373;
}

/* Sidebar */
.sidebar {
  flex: none;
  width: 320px;
  padding-top: 26px;
  background: #1d2327;
}
.group + .group {
  margin-top: 23px;
}
.group + .group.flush {
  margin-top: 0;
}
.item {
  display: flex;
  align-items: flex-start;
  position: relative;
  padding: 16px 0 16px 72px;
  color: #f0f0f1;
}
.glyph {
  position: absolute;
  left: 16px;
  top: 14px;
  width: 40px;
  height: 40px;
}
.name {
  max-width: 220px;
}
.item.current {
  background: #2271b1;
  color: #fff;
}
.item.current::after {
  content: "";
  position: absolute;
  right: 0;
  top: 18px;
  border: 16px solid transparent;
  border-left-width: 0;
  border-right-color: #f0f0f1;
}
.item.current .name {
  max-width: none;
}
.badge {
  width: 36px;
  height: 36px;
  margin: 2px 0 0 12px;
  border-radius: 18px;
  background: #d63638;
  color: #fff;
  font-size: 22px;
  text-align: center;
}
.submenu {
  padding: 15px 0 14px;
  background: #2c3038;
}
.submenu a {
  display: block;
  padding: 10px 24px;
  font-size: 26px;
  color: #b4b9be;
}
.submenu a.active {
  font-weight: 600;
  color: #fff;
}

/* Header */
.page {
  flex: 1;
  min-width: 0;
}
.topbar {
  display: flex;
  height: 112px;
  border-top: 2px solid #1d2327;
  border-bottom: 2px solid #eee;
  background: #fff;
}
.brand {
  display: flex;
  align-items: center;
  gap: 6px;
  width: 318px;
  margin-left: 48px;
  padding-bottom: 8px;
  font-size: 34px;
  font-weight: 600;
  color: #141519;
}
.logo {
  width: 48px;
  height: 68px;
}
.tabs {
  display: flex;
}
.tabs a {
  display: flex;
  align-items: center;
  padding: 0 32px 8px;
  font-size: 26px;
  font-weight: 500;
  color: #4d4d4d;
}
.tabs a.selected {
  margin: 0 -4px;
  border: solid #2271b1;
  border-width: 0 4px 1px;
  box-shadow: inset 4px 0 #3e62f5, inset -4px 0 #3e62f5, inset 0 1px #3e62f5, inset 0 -4px #3e62f5;
  font-weight: 600;
  color: #043959;
}

/* Content */
.content {
  padding: 48px 46px 0 48px;
}
.heading {
  display: flex;
  align-items: center;
  justify-content: space-between;
  margin-bottom: 48px;
}
h1 {
  font-size: 44px;
  line-height: 60px;
  font-weight: 600;
  color: #262626;
}
.range {
  display: flex;
  align-items: center;
  gap: 16px;
  width: 648px;
  height: 72px;
  padding: 0 16px 0 24px;
  border: 2px solid #e5e5e5;
  border-radius: 12px;
  background: #fff;
  box-shadow: 0 2px 4px rgba(0, 0, 0, .05);
  font: inherit;
  color: #141414;
}
.range-label {
  font-weight: 500;
  color: #2c3338;
}
.range svg {
  width: 32px;
  height: 32px;
  margin-left: auto;
}
.card {
  padding: 32px;
  border: 2px solid #e5e5e5;
  border-radius: 16px;
  background: #fff;
  box-shadow: 0 2px 4px rgba(0, 0, 0, .05);
}
.card-head {
  display: flex;
  align-items: center;
  justify-content: space-between;
  padding-bottom: 18px;
  border-bottom: 2px solid #e5e5e5;
}
.card-head p {
  color: #737373;
}
.card-head.lead {
  align-items: flex-start;
}
.card-head.lead .more {
  line-height: 60px;
}
h2 {
  font-size: 36px;
  line-height: 50px;
  margin-bottom: 10px;
  font-weight: 600;
  color: #262626;
}
h3 {
  display: flex;
  align-items: center;
  gap: 10px;
  font-size: 30px;
  line-height: 40px;
  margin-bottom: 10px;
  font-weight: 600;
  color: #262626;
}
.more {
  padding-right: 26px;
  font-weight: 500;
  color: #3b82f6;
}
.countries {
  display: grid;
  grid-template-columns: 1fr 1fr;
  gap: 48px;
  align-items: start;
  padding-top: 32px;
}
.map {
  justify-self: center;
  width: 1242px;
  max-width: 100%;
}
.land {
  fill: #e8e8e8;
  stroke: #d6d6d6;
  vector-effect: non-scaling-stroke;
}
.border {
  fill: none;
  stroke: #c4c4c4;
  vector-effect: non-scaling-stroke;
}
.visited {
  fill: #eef4ff;
}
.sea {
  fill: #fff;
}
table {
  width: 100%;
  margin-top: 22px;
  border-collapse: collapse;
  table-layout: fixed;
  text-align: left;
}
th, td {
  padding: 0 32px;
}
th {
  height: 72px;
  border-bottom: 2px solid #e5e5e5;
  font-weight: 500;
}
th:first-child {
  width: 40%;
}
td {
  height: 96px;
  border-bottom: 2px solid #e5e5e5;
}
tr:last-child td {
  border-bottom: 0;
}
.cell {
  display: flex;
  align-items: center;
  gap: 16px;
}
.flag {
  width: 40px;
  height: 28px;
}
.track {
  width: 344px;
  height: 16px;
  background: #d4d4d4;
}
.fill {
  display: block;
  height: 100%;
  background: #3b82f6;
}

/* Lower cards */
.columns {
  display: grid;
  grid-template-columns: 1fr 1fr;
  gap: 40px;
  margin-top: 40px;
}
.card.small {
  min-height: 640px;
}
.engines {
  display: grid;
  grid-template-columns: 1fr 1fr;
  gap: 32px;
  align-items: center;
  padding-top: 44px;
}
.donut-box {
  display: grid;
  place-items: center;
}
.donut-box > * {
  grid-area: 1 / 1;
}
.donut {
  width: 376px;
  height: 376px;
}
.donut-label {
  display: flex;
  flex-direction: column;
  align-items: center;
  padding-top: 8px;
  font-weight: 500;
  color: #4285f4;
}
.donut-label strong {
  font-size: 38px;
  line-height: 40px;
  font-weight: 700;
  color: #141414;
}
.legend {
  display: flex;
  justify-content: center;
  gap: 24px;
}
.legend li {
  display: flex;
  align-items: center;
  gap: 20px;
  font-size: 25px;
}
.legend i {
  width: 20px;
  height: 20px;
  border-radius: 4px;
}
.engine {
  font-size: 27px;
}
.info {
  width: 28px;
  height: 28px;
}
.chart {
  position: relative;
  display: flex;
  flex-direction: column;
  gap: 24px;
  margin-top: 32px;
  padding-left: 2px;
}
.row {
  display: flex;
  align-items: center;
  gap: 16px;
}
.bar {
  display: flex;
  align-items: center;
  gap: 8px;
  width: 158px;
  height: 56px;
  padding-left: 14px;
  border-radius: 8px;
  background: #d9e9fe;
  white-space: nowrap;
  color: #262626;
}
.row.wide .bar {
  flex: 1;
}
.row.wide .value {
  width: 198px;
}
.favicon {
  flex: none;
  width: 32px;
  height: 32px;
}
.ucc {
  font-size: 10px;
  font-weight: 800;
  fill: #c8201c;
}
.gridlines {
  position: absolute;
  inset: 0 -2px 0 0;
  display: grid;
  grid-template-columns: repeat(5, 1fr);
  border-right: 2px solid #e5e5e5;
}
.gridlines i {
  border-left: 2px solid #e5e5e5;
}
.gridlines .blank {
  border-left-color: transparent;
}
</style>
